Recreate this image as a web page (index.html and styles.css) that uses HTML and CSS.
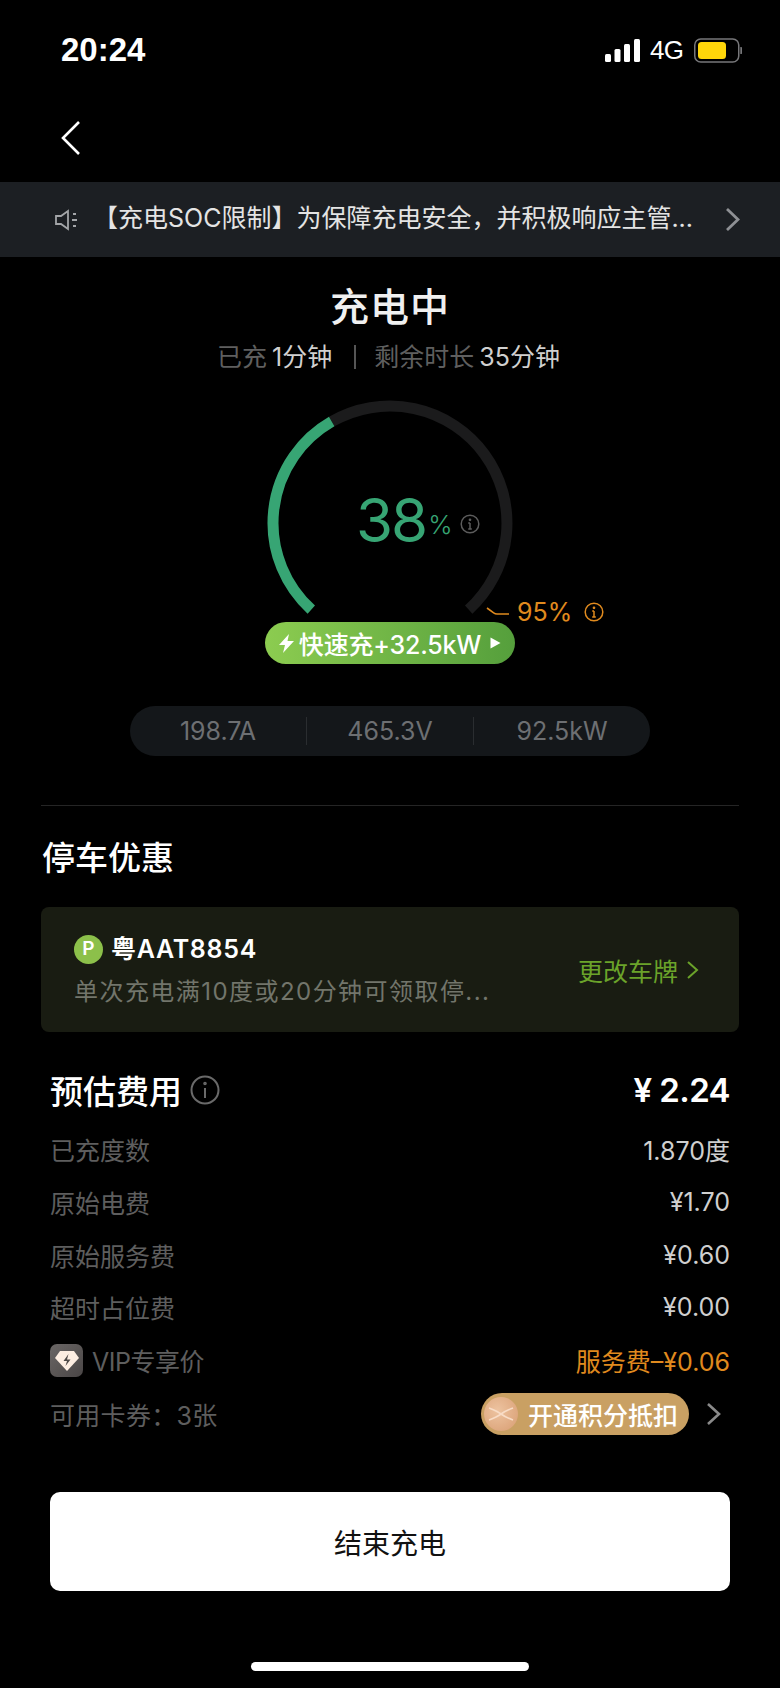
FILE: index.html
```html
<!DOCTYPE html>
<html lang="zh-CN">
<head>
  <meta charset="UTF-8" />
  <meta name="viewport" content="width=device-width, initial-scale=1.0"/>
  <title>充电中</title>
  <link rel="stylesheet" href="styles.css">
</head>
<body>
<div class="page">

  <div class="status-bar">
    <span class="time">20:24</span>
    <div class="status-icons">
      <svg width="35" height="23" viewBox="0 0 35 23" fill="#fff">
        <rect x="0" y="15" width="6" height="8" rx="1.5"/>
        <rect x="9.5" y="10" width="6" height="13" rx="1.5"/>
        <rect x="19" y="5" width="6" height="18" rx="1.5"/>
        <rect x="29" y="0" width="6" height="23" rx="1.5"/>
      </svg>
      <span class="net">4G</span>
      <svg width="48" height="25" viewBox="0 0 48 25">
        <rect x="0.75" y="1" width="44" height="23" rx="6" fill="none" stroke="#77777a" stroke-width="1.5"/>
        <rect x="4" y="4" width="28" height="17" rx="3.5" fill="#ffd60a"/>
        <path d="M46.3 9 a3.5 3.5 0 0 1 0 7z" fill="#77777a"/>
      </svg>
    </div>
  </div>

  <div class="nav">
    <svg width="22" height="36" viewBox="0 0 22 36" fill="none" stroke="#fff" stroke-width="2.6">
      <path d="M20 2 L4 18 L20 34"/>
    </svg>
  </div>

  <div class="notice">
    <svg width="25" height="22" viewBox="0 0 25 22" fill="none" stroke="#a3a5a8" stroke-width="1.8">
      <path d="M2 7 H7 L14 2 V20 L7 15 H2 Z"/>
      <path d="M19 5 h3 M18 11 h5 M19 17 h3"/>
    </svg>
    <span class="notice-text">【充电SOC限制】为保障充电安全，并积极响应主管...</span>
    <svg class="chev" width="15" height="25" viewBox="0 0 15 25" fill="none" stroke="#8e9094" stroke-width="2.8">
      <path d="M2 2 L13 12.5 L2 23"/>
    </svg>
  </div>

  <div class="summary">
    <h1>充电中</h1>
    <div class="durations">
      <span class="muted">已充</span><span class="amount">1分钟</span><i class="sep"></i><span class="muted">剩余时长</span><span class="amount">35分钟</span>
    </div>
  </div>

  <div class="gauge">
    <svg class="ring" width="260" height="260" viewBox="0 0 260 260" fill="none" stroke-width="11">
      <path d="M71.7 28.6 A117 117 0 0 1 208.7 216.6" stroke="#1b1b1c"/>
      <path d="M51.3 216.6 A117 117 0 0 1 71.7 28.6" stroke="#37a574"/>
    </svg>
    <div class="soc">
      <span class="soc-num">38</span>
      <span class="soc-unit">%</span>
      <svg width="20" height="20" viewBox="0 0 20 20" fill="none" stroke="#5c5c5c" stroke-width="1.5">
        <circle cx="10" cy="10" r="8.8"/>
        <path d="M10 9 V15 M8.2 9 H10 M8.2 15 H11.8"/>
        <circle cx="10" cy="5.8" r="0.6"/>
      </svg>
    </div>
    <div class="limit">
      <svg width="24" height="12" viewBox="0 0 24 12" fill="none" stroke="#e08a1e" stroke-width="1.6">
        <path d="M1 2 L8 7 Q9 8 11 8 H23"/>
      </svg>
      <span>95%</span>
      <svg class="limit-info" width="20" height="20" viewBox="0 0 20 20" fill="none" stroke="#e08a1e" stroke-width="1.5">
        <circle cx="10" cy="10" r="8.8"/>
        <path d="M10 9 V15 M8.2 9 H10 M8.2 15 H11.8"/>
        <circle cx="10" cy="5.8" r="0.6"/>
      </svg>
    </div>
    <div class="fast-pill">
      <svg width="15" height="19" viewBox="0 0 15 19" fill="#fff"><path d="M10 0 L0 11 H6 L4 19 L15 7 H8.5 Z"/></svg>
      <span>快速充+32.5kW</span>
      <svg class="pill-arrow" width="11" height="12" viewBox="0 0 11 12" fill="#fff"><path d="M0.5 0.5 L10.5 6 L0.5 11.5 Z"/></svg>
    </div>
  </div>

  <div class="stats">
    <span>198.7A</span>
    <span>465.3V</span>
    <span>92.5kW</span>
  </div>

  <div class="rule"></div>

  <h2 class="parking-title">停车优惠</h2>

  <div class="parking-card">
    <div class="parking-info">
      <div class="plate">
        <span class="p-badge">P</span>
        <span>粤AAT8854</span>
      </div>
      <div class="parking-desc">单次充电满10度或20分钟可领取停...</div>
    </div>
    <div class="change-plate">
      更改车牌
      <svg width="13" height="20" viewBox="0 0 13 20" fill="none" stroke="#6ba32a" stroke-width="2">
        <path d="M2 2 L11 10 L2 18"/>
      </svg>
    </div>
  </div>

  <div class="fees">
    <div class="fee-head">
      <h2>预估费用</h2>
      <svg width="30" height="30" viewBox="0 0 30 30" fill="none" stroke="#6a6a6a" stroke-width="2">
        <circle cx="15" cy="15" r="13.5"/>
        <path d="M15 13 V23"/>
        <circle cx="15" cy="8.5" r="0.8"/>
      </svg>
      <span class="fee-total">¥ 2.24</span>
    </div>
    <div class="fee-row"><span class="label">已充度数</span><span class="value">1.870度</span></div>
    <div class="fee-row"><span class="label">原始电费</span><span class="value">¥1.70</span></div>
    <div class="fee-row"><span class="label">原始服务费</span><span class="value">¥0.60</span></div>
    <div class="fee-row"><span class="label">超时占位费</span><span class="value">¥0.00</span></div>
    <div class="fee-row">
      <span class="label vip">
        <span class="vip-icon">
          <svg width="24" height="21" viewBox="0 0 24 21">
            <path d="M5 1 H19 L24 8 L12 21 L0 8 Z" fill="#fdeee2"/>
            <path d="M13.5 4 L8.5 11 H12 L10.5 16 L15.5 9.5 H12 Z" fill="#4f4a48"/>
          </svg>
        </span>
        <span class="vip-text">VIP专享价</span>
      </span>
      <span class="value orange">服务费–¥0.06</span>
    </div>
    <div class="fee-row coupons">
      <span class="label">可用卡券：3张</span>
      <div class="coupon-right">
        <div class="points-pill">
          <span class="coin">
            <svg width="34" height="34" viewBox="0 0 34 34" fill="none" stroke="#f8dcc6" stroke-width="1.6">
              <path d="M5 11 Q13 14 17 17 Q21 20 29 23 M5 23 Q13 20 17 17 Q21 14 29 11"/>
            </svg>
          </span>
          开通积分抵扣
        </div>
        <svg width="15" height="24" viewBox="0 0 15 24" fill="none" stroke="#8a8a8a" stroke-width="2.6">
          <path d="M2 2 L13 12 L2 22"/>
        </svg>
      </div>
    </div>
  </div>

  <button class="stop-btn">结束充电</button>

  <div class="home-bar"></div>
</div>
</body>
</html>
```

FILE: styles.css
```css
:root {
  --orange: #e08a1e;
  --green: #37a574;
  --cjk: "Inter", "Noto Sans CJK SC", sans-serif;
}

body {
  margin: 0;
  padding: 0;
  background: #000;
  font-family: var(--cjk);
  color: #fff;
}

h1, h2 {
  margin: 0;
}

.page {
  width: 780px;
  height: 1688px;
  overflow: hidden;
  display: flex;
  flex-direction: column;
  background: #000;
}

.status-bar {
  height: 100px;
  padding: 0 38px 0 61px;
  display: flex;
  justify-content: space-between;
  align-items: center;
  box-sizing: border-box;
}

.time {
  font-family: "Liberation Sans", sans-serif;
  font-size: 33px;
  font-weight: 700;
}

.status-icons {
  display: flex;
  align-items: center;
  gap: 10px;
}

.net {
  font-family: "Liberation Sans", sans-serif;
  font-size: 26px;
  letter-spacing: -0.6px;
  width: 34px;
}

.nav {
  height: 82px;
  padding-left: 59px;
  display: flex;
  align-items: flex-start;
  padding-top: 20px;
  box-sizing: border-box;
}

.notice {
  height: 75px;
  background: #1c1f23;
  padding: 0 40px 0 54px;
  display: flex;
  align-items: center;
  box-sizing: border-box;
}

.notice-text {
  font-size: 25px;
  line-height: 34px;
  color: #e4e4e4;
  margin: -4px 0 0 14px;
  white-space: nowrap;
  flex: 1;
}

.summary {
  text-align: center;
  padding-right: 0;
}

.summary h1 {
  margin-top: 24px;
  font-size: 39px;
  line-height: 52px;
  font-weight: 500;
  letter-spacing: 1px;
  color: #f0f0f0;
}

.durations {
  margin-top: 6px;
  padding-right: 3px;
  font-size: 25px;
  line-height: 36px;
  color: #d0d0d0;
}

.muted {
  color: #5f5f5f;
}

.amount {
  margin-left: 5px;
}

.sep {
  display: inline-block;
  width: 2px;
  height: 24px;
  background: #555;
  margin: 0 18px 0 22px;
  vertical-align: -3px;
}

.gauge {
  position: relative;
  width: 260px;
  height: 300px;
  margin: 18px auto 0;
}

.ring {
  display: block;
}

.soc {
  position: absolute;
  left: 96px;
  top: 91px;
  display: flex;
  align-items: center;
  color: var(--green);
}

.soc-num {
  font-size: 60px;
  line-height: 72px;
  font-weight: 400;
  letter-spacing: -2px;
}

.soc-unit {
  font-size: 26px;
  font-weight: 300;
  margin: 8px 7px 0 2px;
}

.soc svg {
  margin-top: 8px;
}

.limit {
  position: absolute;
  left: 226px;
  top: 204px;
  display: flex;
  align-items: center;
  gap: 7px;
  font-size: 25px;
  color: var(--orange);
  white-space: nowrap;
}

.limit-info {
  margin-left: 5px;
}

.fast-pill {
  position: absolute;
  left: 5px;
  top: 229px;
  width: 250px;
  height: 42px;
  border-radius: 21px;
  background: linear-gradient(90deg, #8ccc50, #559f3c);
  display: flex;
  align-items: center;
  justify-content: center;
  gap: 5px;
  font-size: 25px;
  font-weight: 500;
  letter-spacing: -0.2px;
  white-space: nowrap;
}

.pill-arrow {
  margin-left: 4px;
}

.stats {
  width: 520px;
  height: 50px;
  margin: 13px auto 0;
  background: #14171a;
  border-radius: 25px;
  display: grid;
  grid-template-columns: 176px 167px 177px;
  align-items: center;
  text-align: center;
  font-size: 25px;
  color: #6d6f72;
}

.stats span + span {
  border-left: 1px solid #2a2d30;
  line-height: 28px;
}

.rule {
  height: 1px;
  margin: 49px 41px 0;
  background: #252525;
}

.parking-title {
  margin: 30px 0 0 42px;
  font-size: 33px;
  line-height: 44px;
  font-weight: 500;
}

.parking-card {
  height: 125px;
  margin: 27px 41px 0;
  padding: 0 40px 0 33px;
  background: #191c12;
  border-radius: 8px;
  display: flex;
  justify-content: space-between;
  align-items: center;
  box-sizing: border-box;
}

.parking-info {
  padding-top: 4px;
}

.plate {
  display: flex;
  align-items: center;
  gap: 8px;
  font-size: 25px;
  line-height: 30px;
  font-weight: 600;
  letter-spacing: 0.7px;
}

.p-badge {
  width: 29px;
  height: 29px;
  border-radius: 50%;
  background: #8cc04a;
  display: flex;
  align-items: center;
  justify-content: center;
  font-size: 19px;
  letter-spacing: 0;
}

.parking-desc {
  margin-top: 11px;
  font-size: 24px;
  line-height: 34px;
  color: #72756b;
  letter-spacing: 1.45px;
}

.change-plate {
  display: flex;
  align-items: center;
  gap: 8px;
  font-size: 25px;
  color: #6ba32a;
}

.fees {
  margin: 30px 50px 0 50px;
}

.fee-head {
  height: 56px;
  margin-bottom: 5px;
  display: flex;
  align-items: center;
  gap: 8px;
}

.fee-head h2 {
  font-size: 33px;
  font-weight: 500;
}

.fee-total {
  margin-left: auto;
  font-size: 33px;
  font-weight: 600;
  letter-spacing: -0.6px;
}

.fee-row {
  height: 52.7px;
  display: flex;
  justify-content: space-between;
  align-items: center;
  font-size: 25px;
}

.label {
  color: #5e5e5e;
}

.value {
  color: #cfcfcf;
}

.orange {
  color: var(--orange);
}

.vip {
  display: flex;
  align-items: center;
  gap: 9px;
}

.vip-text {
  letter-spacing: -0.5px;
}

.vip-icon {
  width: 33px;
  height: 33px;
  border-radius: 7px;
  background: linear-gradient(135deg, #6a6665, #4a4646);
  display: flex;
  align-items: center;
  justify-content: center;
}

.coupons {
  margin-top: 1px;
}

.coupons .label {
  letter-spacing: 0.3px;
}

.coupon-right {
  display: flex;
  align-items: center;
  gap: 17px;
  margin-right: 9px;
}

.points-pill {
  width: 208px;
  height: 42px;
  border-radius: 21px;
  background: #c9a063;
  display: flex;
  align-items: center;
  gap: 10px;
  padding-left: 3px;
  box-sizing: border-box;
  font-size: 25px;
  font-weight: 500;
  color: #fff;
}

.coin {
  width: 34px;
  height: 34px;
  border-radius: 50%;
  background: radial-gradient(circle at 40% 40%, #edc3a0, #d89d72);
  display: block;
}

.coin svg {
  display: block;
}

.stop-btn {
  display: block;
  width: 680px;
  height: 99px;
  margin: 52px 0 0 50px;
  padding: 0;
  border: none;
  border-radius: 10px;
  background: #fff;
  color: #111;
  font-family: var(--cjk);
  font-size: 28px;
}

.home-bar {
  width: 278px;
  height: 9px;
  margin: auto auto 17px;
  border-radius: 5px;
  background: #fff;
}
```
